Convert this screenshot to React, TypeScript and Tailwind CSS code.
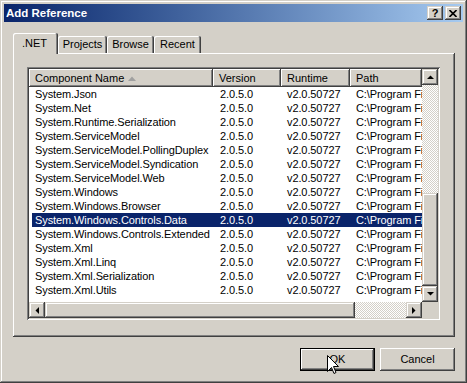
import React from 'react';

const font = { fontFamily: '"Liberation Sans", Arial, sans-serif' };

// classic 3D edges
const raisedBtn =
  'shadow-[inset_-1px_-1px_#404040,inset_1px_1px_#ffffff,inset_-2px_-2px_#808080,inset_2px_2px_#D4D0C8]';
const raisedScroll =
  'shadow-[inset_-1px_-1px_#404040,inset_1px_1px_#D4D0C8,inset_-2px_-2px_#808080,inset_2px_2px_#ffffff]';
const checker =
  'bg-[image:repeating-conic-gradient(#D4D0C8_0_25%,#ffffff_0_50%)] bg-[length:2px_2px]';

const rows = [
  'System.Json',
  'System.Net',
  'System.Runtime.Serialization',
  'System.ServiceModel',
  'System.ServiceModel.PollingDuplex',
  'System.ServiceModel.Syndication',
  'System.ServiceModel.Web',
  'System.Windows',
  'System.Windows.Browser',
  'System.Windows.Controls.Data',
  'System.Windows.Controls.Extended',
  'System.Xml',
  'System.Xml.Linq',
  'System.Xml.Serialization',
  'System.Xml.Utils',
];

const Arrow = ({ dir }: { dir: 'up' | 'down' | 'left' | 'right' }) => {
  const pts = {
    up: '0,4 7,4 3.5,0.5',
    down: '0,0 7,0 3.5,3.5',
    left: '4,0 4,7 0.5,3.5',
    right: '0,0 0,7 3.5,3.5',
  }[dir];
  const vertical = dir === 'up' || dir === 'down';
  return (
    <svg width={vertical ? 7 : 4} height={vertical ? 4 : 7} viewBox={vertical ? '0 0 7 4' : '0 0 4 7'}>
      <polygon points={pts} fill="#000" />
    </svg>
  );
};

const ScrollButton = ({ dir }: { dir: 'up' | 'down' | 'left' | 'right' }) => (
  <div className={`w-[16px] h-[16px] shrink-0 bg-[#D4D0C8] flex items-center justify-center ${raisedScroll}`}>
    <Arrow dir={dir} />
  </div>
);

const Tab = ({ label, width, selected }: { label: string; width: number; selected?: boolean }) => (
  <div
    className={`bg-[#D4D0C8] rounded-t-[2px] shadow-[inset_-1px_0_#404040,inset_1px_1px_#ffffff,inset_-2px_0_#808080] text-[11px] text-black ${
      selected ? 'h-[21px] -mb-px relative z-10 pl-[9px] pt-[4px] leading-[13px]' : 'h-[17px] flex items-center justify-center leading-[13px]'
    }`}
    style={{ width }}
  >
    {label}
  </div>
);

const HeaderCell = ({ label, width, sort }: { label: string; width: number; sort?: boolean }) => (
  <div
    className="h-full flex items-center pl-[6px] text-[11px] shrink-0 bg-[#D4D0C8] shadow-[inset_-1px_-1px_#404040,inset_1px_1px_#ffffff,inset_-2px_-2px_#808080]"
    style={{ width }}
  >
    <span>{label}</span>
    {sort && (
      <svg width="8" height="5" viewBox="0 0 8 5" className="ml-[4px]">
        <polygon points="0,5 8,5 4,0.5" fill="#A0A0A0" />
      </svg>
    )}
  </div>
);

export default function App() {
  return (
    <div
      className="w-[467px] h-[383px] bg-[#D4D0C8] p-[4px] shadow-[inset_-1px_-1px_#404040,inset_1px_1px_#D4D0C8,inset_-2px_-2px_#808080,inset_2px_2px_#ffffff]"
      style={font}
    >
      {/* title bar */}
      <div className="h-[18px] flex items-center bg-linear-to-r from-[#0A246A] to-[#A6CAF0] pl-[2px] pr-[2px]">
        <span className="flex-1 text-white font-bold text-[11.5px] leading-[14px]">Add Reference</span>
        <div className="flex gap-[2px]">
          <div className={`w-[16px] h-[14px] bg-[#D4D0C8] flex items-center justify-center text-[11px] font-bold leading-[11px] ${raisedScroll}`}>
            ?
          </div>
          <div className={`w-[16px] h-[14px] bg-[#D4D0C8] flex items-center justify-center ${raisedScroll}`}>
            <svg width="8" height="7" viewBox="0 0 8 7">
              <path d="M0.5 0 L7.5 7 M7.5 0 L0.5 7" stroke="#000" strokeWidth="1.6" />
            </svg>
          </div>
        </div>
      </div>

      <div className="pt-[11px] pl-[9px]">
        {/* tabs */}
        <div className="flex items-end h-[20px]">
          <Tab label=".NET" width={45} selected />
          <Tab label="Projects" width={49} />
          <Tab label="Browse" width={47} />
          <Tab label="Recent" width={47} />
        </div>

        {/* tab panel */}
        <div className="w-[442px] h-[284px] p-[14px] shadow-[inset_-1px_-1px_#404040,inset_1px_1px_#ffffff,inset_-2px_-2px_#808080]">
          <div className="w-[413px] h-[253px] p-[2px] shadow-[inset_1px_1px_#808080,inset_-1px_-1px_#ffffff,inset_2px_2px_#404040,inset_-2px_-2px_#D4D0C8]">
            <div className="flex flex-col w-[409px] h-[249px]">
              <div className="flex h-[233px]">
                {/* list */}
                <div className="w-[393px] bg-white overflow-hidden flex flex-col">
                  <div className="flex h-[18px] shrink-0 text-black">
                    <HeaderCell label="Component Name" width={184} sort />
                    <HeaderCell label="Version" width={68} />
                    <HeaderCell label="Runtime" width={69} />
                    <HeaderCell label="Path" width={72} />
                  </div>
                  {rows.map((name) => {
                    const sel = name === 'System.Windows.Controls.Data';
                    return (
                      <div key={name} className="flex h-[14px] pl-[3px] text-[11px] leading-[14px] tracking-[-0.1px] whitespace-nowrap">
                        <div className={`flex w-[390px] ${sel ? 'bg-[#0A246A] text-white' : 'text-black'}`}>
                          <div className="w-[181px] pl-[3px] overflow-hidden">{name}</div>
                          <div className="w-[68px] pl-[7px]">2.0.5.0</div>
                          <div className="w-[69px] pl-[6px]">v2.0.50727</div>
                          <div className="w-[72px] pl-[6px]">C:\Program Files\Microsoft SDKs</div>
                        </div>
                      </div>
                    );
                  })}
                </div>
                {/* vertical scrollbar */}
                <div className="w-[16px] flex flex-col">
                  <ScrollButton dir="up" />
                  <div className={`h-[108px] ${checker}`} />
                  <div className={`h-[93px] bg-[#D4D0C8] ${raisedScroll}`} />
                  <ScrollButton dir="down" />
                </div>
              </div>
              {/* horizontal scrollbar */}
              <div className="flex h-[16px]">
                <ScrollButton dir="left" />
                <div className={`w-[310px] bg-[#D4D0C8] ${raisedScroll}`} />
                <div className={`w-[51px] ${checker}`} />
                <ScrollButton dir="right" />
                <div className="w-[16px] bg-[#D4D0C8]" />
              </div>
            </div>
          </div>
        </div>

        {/* buttons */}
        <div className="w-[442px] mt-[11px] flex justify-end gap-[5px] text-[11px] text-black">
          <div className="relative w-[75px] h-[23px] border border-black">
            <div className={`w-full h-full bg-[#D4D0C8] flex items-center justify-center ${raisedBtn}`}>OK</div>
            <svg width="12" height="20" viewBox="0 0 12 20" className="absolute left-[26px] top-[6px]">
              <path
                d="M0.5 0.5 L0.5 16.5 L4.5 12.5 L7 18.5 L9 17.5 L6.5 11.5 L11.5 11.5 Z"
                fill="#fff"
                stroke="#000"
                strokeWidth="1"
              />
            </svg>
          </div>
          <div className={`w-[75px] h-[23px] bg-[#D4D0C8] flex items-center justify-center ${raisedBtn}`}>Cancel</div>
        </div>
      </div>
    </div>
  );
}
